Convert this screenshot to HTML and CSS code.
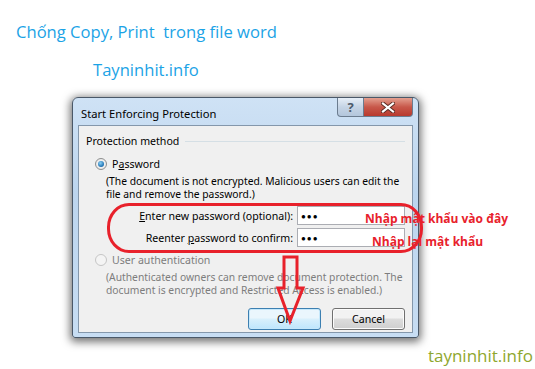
FILE: index.html
```html
<!DOCTYPE html>
<html lang="vi">
<head>
  <meta charset="UTF-8" />
  <title>Chống Copy, Print trong file word</title>
  <link rel="stylesheet" href="styles.css">
</head>
<body>
<div class="page">
  <h1 class="title">Chống Copy, Print&nbsp; trong file word</h1>
  <p class="site">Tayninhit.info</p>

  <div class="dialog">
    <div class="titlebar">
      <span class="caption">Start Enforcing Protection</span>
      <div class="caption-btns">
        <span class="btn-help">?</span>
        <span class="btn-close">
          <svg width="14" height="11" viewBox="0 0 14 11"><path d="M2 1.5 L12 9.5 M12 1.5 L2 9.5" stroke="#5a2a22" stroke-width="4" stroke-linecap="square"/><path d="M2 1.5 L12 9.5 M12 1.5 L2 9.5" stroke="#fff" stroke-width="2.2" stroke-linecap="square"/></svg>
        </span>
      </div>
    </div>
    <div class="client">
      <div class="group-title"><span>Protection method</span></div>
      <div class="radio-row"><span class="radio checked"></span><span>P<u>a</u>ssword</span></div>
      <p class="note">(The document is not encrypted. Malicious users can edit the<br>file and remove the password.)</p>
      <div class="field"><label><u>E</u>nter new password (optional):</label><span class="textbox">●●●</span></div>
      <div class="field"><label>Reenter <u>p</u>assword to confirm:</label><span class="textbox">●●●</span></div>
      <div class="radio-row disabled"><span class="radio"></span><span>User authentication</span></div>
      <p class="note disabled">(Authenticated owners can remove document protection. The<br>document is encrypted and Restricted Access is enabled.)</p>
      <div class="buttons">
        <button class="default">OK</button>
        <button>Cancel</button>
      </div>
    </div>
  </div>

  <p class="watermark">tayninhit.info</p>

  <!-- annotations drawn over the screenshot -->
  <div class="mark-ring"></div>
  <span class="mark-text one">Nhập mật khẩu vào đây</span>
  <span class="mark-text two">Nhập lại mật khẩu</span>
  <svg class="mark-arrow" width="32" height="72" viewBox="0 0 32 72">
    <polygon points="8,3 21,3 21,34 27,34 14,67 2,34 8,34" fill="none" stroke="#e8212b" stroke-width="3" stroke-linejoin="miter"/>
  </svg>
</div>
</body>
</html>
```

FILE: styles.css
```css
:root {
  --blue-title: #1ba3e6;
  --mark-red: #e8212b;
  --olive: #8fa72e;
}
* {
  box-sizing: border-box;
}
html, body {
  margin: 0;
  padding: 0;
  background: #ffffff;
}
.page {
  position: relative;
  width: 535px;
  height: 369px;
  overflow: hidden;
  font-family: "Open Sans", "Noto Sans", sans-serif;
}
.title {
  margin: 0;
  padding: 21px 0 0 16px;
  font-size: 16.6px;
  line-height: 22px;
  font-weight: normal;
  color: var(--blue-title);
}
.site {
  margin: 0;
  padding: 16px 0 0 93px;
  font-size: 16.6px;
  line-height: 22px;
  color: var(--blue-title);
}

/* dialog window */
.dialog {
  margin: 16px 0 0 72px;
  width: 347px;
  height: 241px;
  display: flex;
  flex-direction: column;
  background: linear-gradient(#cfe2f5, #bcd5ee 40%, #c7ddf3);
  border: 1px solid #4a5868;
  border-radius: 6px 6px 3px 3px;
  box-shadow: 0 2px 9px 2px rgba(0,0,0,0.55);
  font-family: "Noto Sans", sans-serif;
  font-size: 10.6px;
  color: #000;
}
.titlebar {
  height: 27px;
  display: flex;
  justify-content: space-between;
  align-items: flex-start;
  padding-left: 8px;
}
.caption {
  margin-top: 8px;
  font-size: 11.2px;
}
.caption-btns {
  display: flex;
  margin-right: 5px;
}
.btn-help, .btn-close {
  height: 19px;
  display: flex;
  align-items: center;
  justify-content: center;
  border: 1px solid #6b7c8f;
  border-top: none;
}
.btn-help {
  width: 27px;
  border-radius: 0 0 0 4px;
  background: linear-gradient(#e6eef7, #c5d4e5 50%, #b3c6dc);
  color: #4d5a6a;
  font-weight: bold;
  font-size: 13px;
}
.btn-close {
  width: 49px;
  border-left: none;
  border-radius: 0 0 4px 0;
  background: linear-gradient(#e4a090, #c8584a 50%, #b8392e);
}
.client {
  flex: 1;
  margin: 0 5px 4px 5px;
  background: #f0f0f0;
  border: 1px solid #8497ab;
  padding: 5px 7px 0 7px;
}
.group-title {
  display: flex;
  align-items: center;
  gap: 6px;
  height: 20px;
}
.group-title::after {
  content: "";
  flex: 1;
  border-top: 1px solid #d5dfe5;
}
.radio-row {
  display: flex;
  align-items: center;
  gap: 5px;
  margin: 5px 0 0 9px;
  height: 15px;
}
.radio {
  width: 12px;
  height: 12px;
  border-radius: 50%;
  border: 1px solid #8e8f8f;
  background: radial-gradient(#ffffff, #e0e0e0);
  display: flex;
  align-items: center;
  justify-content: center;
}
.radio.checked::after {
  content: "";
  width: 6px;
  height: 6px;
  border-radius: 50%;
  background: radial-gradient(circle at 40% 35%, #8ad0f5, #1c6fb0 70%, #0d4a80);
}
.note {
  margin: 4px 0 0 20px;
  font-size: 10.3px;
  line-height: 13px;
  white-space: nowrap;
}
.disabled {
  color: #7d7d7d;
}
.disabled .radio {
  border-color: #c5c5c5;
  background: #f4f4f4;
}
.field {
  display: flex;
  justify-content: flex-end;
  align-items: center;
  gap: 4px;
  margin-top: 5px;
  height: 19px;
}
.field + .field {
  margin-top: 3px;
}
.textbox {
  width: 108px;
  height: 19px;
  background: #fff;
  border: 1px solid #abadb3;
  font-size: 8px;
  letter-spacing: 1px;
  padding-left: 3px;
  line-height: 17px;
}
.buttons {
  display: flex;
  justify-content: flex-end;
  gap: 11px;
  margin-top: 11px;
}
.buttons button {
  width: 73px;
  height: 22px;
  font: inherit;
  color: #000;
  border: 1px solid #707070;
  border-radius: 3px;
  background: linear-gradient(#f2f2f2 45%, #dddddd 50%, #cfcfcf);
  box-shadow: inset 0 0 0 1px #fcfcfc;
}
.buttons button.default {
  border-color: #3c7fb1;
  background: linear-gradient(#eaf6fd 45%, #d9f0fc 50%, #bee6fd);
  box-shadow: inset 0 0 0 1px #c6e8fb;
}

.watermark {
  position: absolute;
  right: 2px;
  bottom: 2px;
  margin: 0;
  font-size: 17px;
  color: var(--olive);
}

/* red annotations */
.mark-ring {
  position: absolute;
  left: 107px;
  top: 203px;
  width: 316px;
  height: 50px;
  border: 3px solid var(--mark-red);
  border-radius: 22px / 24px;
}
.mark-text {
  position: absolute;
  font-family: "Open Sans", sans-serif;
  font-weight: bold;
  font-size: 12px;
  color: var(--mark-red);
  white-space: nowrap;
}
.mark-text.one {
  left: 365px;
  top: 210px;
}
.mark-text.two {
  left: 372px;
  top: 233px;
}
.mark-arrow {
  position: absolute;
  left: 276px;
  top: 254px;
}
```
